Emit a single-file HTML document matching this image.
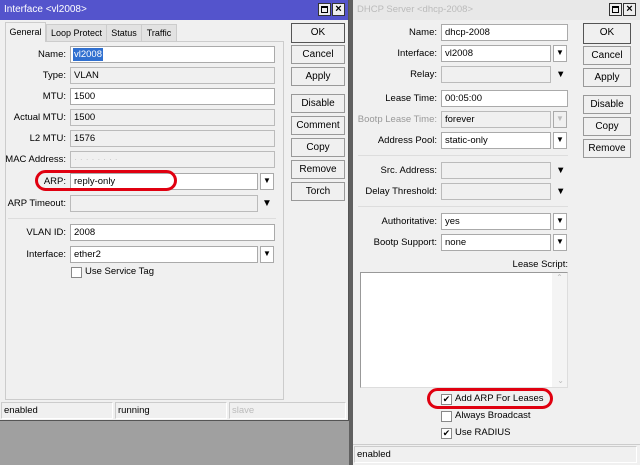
<!DOCTYPE html><html><head><style>
*{box-sizing:border-box;margin:0;padding:0}
body{width:640px;height:465px;background:#a0a0a0;font-family:"Liberation Sans",sans-serif;font-size:9.5px;color:#000;position:relative;overflow:hidden}
div,span{position:absolute}
.win{background:#f0f0f0}
.l{text-align:right;line-height:17px;height:17px;white-space:nowrap}
.i{background:#fff;border:1px solid #aaa;height:17px;line-height:15px;padding-left:3px}
.g{background:#f0f0f0;border:1px solid #bbb}
.b{width:54px;height:19px;border:1px solid #999;background:#f0f0f0;text-align:center;line-height:17px;font-size:10px}
.ab{width:14px;height:17px;border:1px solid #aaa;background:#fff;text-align:center;line-height:14px;font-size:8px}
.cb{width:11px;height:11px;border:1px solid #888;background:#fff;font-size:9px;line-height:9px;text-align:center}
.sep{height:1px;background:#ddd}
.oval{border:3px solid #e00010;border-radius:12px}
.sb{height:17px;border:1px solid #ccc;border-right-color:#fff;border-bottom-color:#fff;line-height:15px;padding-left:2px;top:0}
.tab{height:18px;background:#e2e2e2;border:1px solid #ccc;text-align:center;line-height:16px;font-size:9px;white-space:nowrap}
</style></head><body>
<!-- left window -->
<div class="win" style="left:0;top:0;width:349px;height:421px;border-right:1px solid #555;border-bottom:1px solid #555"></div>
<div style="left:0;top:0;width:348px;height:20px;background:#5454cc;color:#fff;line-height:20px;padding-left:4px;font-size:10px">Interface &lt;vl2008&gt;</div>
<div style="left:318px;top:3px;width:13px;height:13px;background:#eee;border:1px solid #333"><span style="left:2px;top:2px;width:7px;height:7px;border:1px solid #000;border-top-width:2px"></span></div>
<div style="left:332px;top:3px;width:13px;height:13px;background:#eee;border:1px solid #333;font-size:11px;font-weight:bold;line-height:11px;text-align:center">×</div>
<div style="left:5px;top:41px;width:279px;height:359px;border:1px solid #ccc"></div>
<div class="tab" style="left:46px;top:24px;width:61px">Loop Protect</div>
<div class="tab" style="left:106px;top:24px;width:36px">Status</div>
<div class="tab" style="left:141px;top:24px;width:36px">Traffic</div>
<div class="tab" style="left:5px;top:22px;width:41px;height:20px;background:#f0f0f0;border-bottom:none;line-height:18px">General</div>

<div class="l" style="left:0;top:46px;width:66px">Name:</div><div class="i" style="left:70px;top:46px;width:205px"><span style="background:#3070d0;color:#fff;left:2px;top:1px;line-height:13px;padding:0 1px">vl2008</span></div>
<div class="l" style="left:0;top:67px;width:66px">Type:</div><div class="i g" style="left:70px;top:67px;width:205px">VLAN</div>
<div class="l" style="left:0;top:88px;width:66px">MTU:</div><div class="i" style="left:70px;top:88px;width:205px">1500</div>
<div class="l" style="left:0;top:109px;width:66px">Actual MTU:</div><div class="i g" style="left:70px;top:109px;width:205px">1500</div>
<div class="l" style="left:0;top:130px;width:66px">L2 MTU:</div><div class="i g" style="left:70px;top:130px;width:205px">1576</div>
<div class="l" style="left:0;top:151px;width:66px">MAC Address:</div><div class="i g" style="left:70px;top:151px;width:205px;color:#ccc">· · · · · · · ·</div>
<div class="l" style="left:0;top:173px;width:66px">ARP:</div><div class="i" style="left:70px;top:173px;width:188px">reply-only</div><div class="ab" style="left:260px;top:173px">▼</div>
<div class="l" style="left:0;top:195px;width:66px">ARP Timeout:</div><div class="i g" style="left:70px;top:195px;width:188px"></div><div style="left:262px;top:195px;font-size:10px;line-height:17px">▼</div>
<div class="sep" style="left:8px;top:218px;width:268px"></div>
<div class="l" style="left:0;top:224px;width:66px">VLAN ID:</div><div class="i" style="left:70px;top:224px;width:205px">2008</div>
<div class="l" style="left:0;top:246px;width:66px">Interface:</div><div class="i" style="left:70px;top:246px;width:188px">ether2</div><div class="ab" style="left:260px;top:246px">▼</div>
<div class="cb" style="left:71px;top:267px"></div><div style="left:85px;top:265px;line-height:14px">Use Service Tag</div>
<div class="oval" style="left:35px;top:170px;width:142px;height:21px"></div>

<div class="b" style="left:291px;top:23px;height:20px;border-color:#555">OK</div>
<div class="b" style="left:291px;top:45px">Cancel</div>
<div class="b" style="left:291px;top:67px">Apply</div>
<div class="b" style="left:291px;top:94px">Disable</div>
<div class="b" style="left:291px;top:116px">Comment</div>
<div class="b" style="left:291px;top:138px">Copy</div>
<div class="b" style="left:291px;top:160px">Remove</div>
<div class="b" style="left:291px;top:182px">Torch</div>
<div style="left:0;top:402px;width:347px;height:18px">
<div class="sb" style="left:1px;width:112px">enabled</div>
<div class="sb" style="left:115px;width:112px">running</div>
<div class="sb" style="left:229px;width:117px;color:#bbb">slave</div></div>

<!-- right window -->
<div style="left:349px;top:0;width:4px;height:465px;background:#606060"></div>
<div class="win" style="left:353px;top:0;width:287px;height:465px"></div>
<div style="left:353px;top:0;width:287px;height:20px;background:#e8e8e8;color:#bbb;line-height:20px;padding-left:4px">DHCP Server &lt;dhcp-2008&gt;</div>
<div style="left:609px;top:3px;width:13px;height:13px;background:#eee;border:1px solid #333"><span style="left:2px;top:2px;width:7px;height:7px;border:1px solid #000;border-top-width:2px"></span></div>
<div style="left:623px;top:3px;width:13px;height:13px;background:#eee;border:1px solid #333;font-size:11px;font-weight:bold;line-height:11px;text-align:center">×</div>

<div class="l" style="left:353px;top:24px;width:84px">Name:</div><div class="i" style="left:441px;top:24px;width:127px">dhcp-2008</div>
<div class="l" style="left:353px;top:45px;width:84px">Interface:</div><div class="i" style="left:441px;top:45px;width:110px">vl2008</div><div class="ab" style="left:553px;top:45px">▼</div>
<div class="l" style="left:353px;top:66px;width:84px">Relay:</div><div class="i g" style="left:441px;top:66px;width:110px"></div><div style="left:556px;top:66px;line-height:17px">▼</div>
<div class="l" style="left:353px;top:90px;width:84px">Lease Time:</div><div class="i" style="left:441px;top:90px;width:127px">00:05:00</div>
<div class="l" style="left:353px;top:111px;width:84px;color:#999">Bootp Lease Time:</div><div class="i g" style="left:441px;top:111px;width:110px">forever</div><div class="ab" style="left:553px;top:111px;background:#f0f0f0;color:#bbb">▼</div>
<div class="l" style="left:353px;top:132px;width:84px">Address Pool:</div><div class="i" style="left:441px;top:132px;width:110px">static-only</div><div class="ab" style="left:553px;top:132px">▼</div>
<div class="sep" style="left:358px;top:155px;width:210px"></div>
<div class="l" style="left:353px;top:162px;width:84px">Src. Address:</div><div class="i g" style="left:441px;top:162px;width:110px"></div><div style="left:556px;top:162px;line-height:17px">▼</div>
<div class="l" style="left:353px;top:183px;width:84px">Delay Threshold:</div><div class="i g" style="left:441px;top:183px;width:110px"></div><div style="left:556px;top:183px;line-height:17px">▼</div>
<div class="sep" style="left:358px;top:206px;width:210px"></div>
<div class="l" style="left:353px;top:213px;width:84px">Authoritative:</div><div class="i" style="left:441px;top:213px;width:110px">yes</div><div class="ab" style="left:553px;top:213px">▼</div>
<div class="l" style="left:353px;top:234px;width:84px">Bootp Support:</div><div class="i" style="left:441px;top:234px;width:110px">none</div><div class="ab" style="left:553px;top:234px">▼</div>
<div class="l" style="left:353px;top:256px;width:215px">Lease Script:</div>
<div style="left:360px;top:272px;width:208px;height:116px;background:#fff;border:1px solid #999;border-right-color:#ddd;border-bottom-color:#ddd"><span style="right:0;top:0;width:15px;height:114px;background:#f4f4f4;color:#bbb;font-size:8px;text-align:center">⌃</span><span style="right:3px;bottom:2px;color:#bbb;font-size:8px">⌄</span></div>
<div class="cb" style="left:441px;top:394px">✔</div><div style="left:455px;top:392px;line-height:14px">Add ARP For Leases</div>
<div class="cb" style="left:441px;top:411px"></div><div style="left:455px;top:409px;line-height:14px">Always Broadcast</div>
<div class="cb" style="left:441px;top:428px">✔</div><div style="left:455px;top:426px;line-height:14px">Use RADIUS</div>
<div class="oval" style="left:427px;top:388px;width:126px;height:21px"></div>

<div class="b" style="left:583px;top:23px;width:48px;height:21px;border-color:#555">OK</div>
<div class="b" style="left:583px;top:46px;width:48px">Cancel</div>
<div class="b" style="left:583px;top:68px;width:48px">Apply</div>
<div class="b" style="left:583px;top:95px;width:48px">Disable</div>
<div class="b" style="left:583px;top:117px;width:48px">Copy</div>
<div class="b" style="left:583px;top:139px;width:48px">Remove</div>
<div class="sep" style="left:353px;top:444px;width:287px;background:#ccc"></div>
<div style="left:353px;top:446px;width:287px;height:18px"><div class="sb" style="left:1px;width:283px">enabled</div></div>
</body></html>
